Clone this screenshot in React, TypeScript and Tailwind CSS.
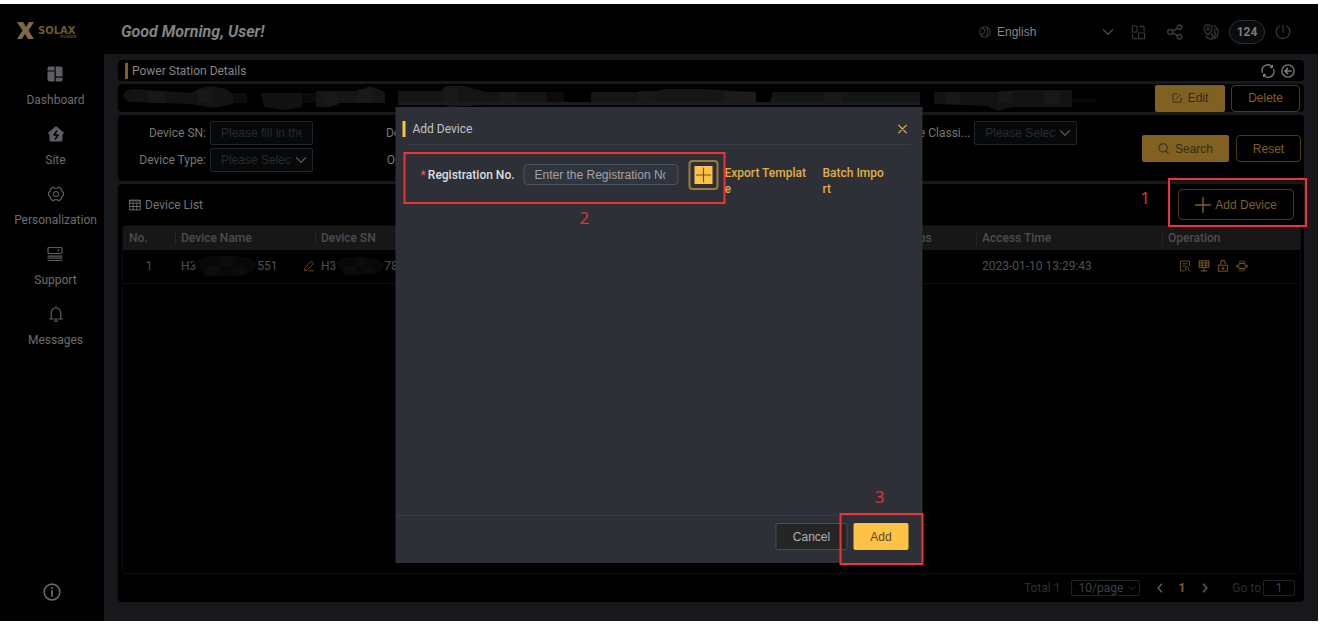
import { FC, ReactNode } from "react";

type IconProps = { className?: string; children: ReactNode; size?: string };

const Icon: FC<IconProps> = ({ className = "", children, size = "0 0 16 16" }) => (
  <svg
    viewBox={size}
    className={className}
    fill="none"
    stroke="currentColor"
    strokeWidth="1.2"
    strokeLinecap="round"
    strokeLinejoin="round"
    aria-hidden="true"
  >
    {children}
  </svg>
);

const Chevron: FC<{ className?: string }> = ({ className }) => (
  <Icon className={className}>
    <path d="M2 5l6 6 6-6" strokeWidth="1.6" />
  </Icon>
);

const Logo = () => (
  <div className="flex h-[50px] items-center pt-1 pl-[17px]">
    <svg viewBox="0 0 62 20" className="h-5 w-[62px]" aria-hidden="true">
      <path
        d="M0 1h6l3 5 3-5h5l-5.500 8.500L17 18h-6l-3-5-3 5H0l5.500-8.500z"
        fill="#7d6a45"
      />
      <text
        x="21"
        y="13"
        fontSize="10"
        fontWeight="700"
        fontFamily="DejaVu Sans, sans-serif"
        fill="#745821"
      >
        SOLAX
      </text>
      <text
        x="43"
        y="17"
        fontSize="4"
        fontWeight="700"
        fontFamily="DejaVu Sans, sans-serif"
        fill="#5a4418"
      >
        POWER
      </text>
    </svg>
  </div>
);

const menu = [
  {
    label: "Dashboard",
    icon: (
      <g fill="currentColor" stroke="none">
        <path d="M2.500 0.500H7.500V4.500H0.500V2.500a2 2 0 0 1 2-2z" />
        <path d="M0.500 5.500H7.500V15.500H2.500a2 2 0 0 1-2-2z" />
        <path d="M8.700 0.500H13.500a2 2 0 0 1 2 2V10.500H8.700z" />
        <path d="M8.700 11.700H15.500V13.500a2 2 0 0 1-2 2H8.700z" />
      </g>
    ),
  },
  {
    label: "Site",
    icon: (
      <>
        <path
          d="M8 0L16 6.800 15 8.500h-.5V14a1.500 1.500 0 0 1-1.500 1.500H3A1.500 1.500 0 0 1 1.500 14V8.500H1L0 6.800z"
          fill="currentColor"
          stroke="none"
        />
        <path d="M8.800 5L5.800 9h4.400L7.300 13" stroke="#000" strokeWidth="1.500" />
      </>
    ),
  },
  {
    label: "Personalization",
    icon: (
      <>
        <path d="M5 1.300c1 .9 1.800 1 3 1s2-.1 3-1l2.200 1.400c-.2 1.400 0 2.300 2.300 4v2.600c-2.300 1.700-2.500 2.600-2.300 4L11 14.700c-1-.9-1.800-1-3-1s-2 .1-3 1l-2.200-1.400c.2-1.400 0-2.300-2.300-4V6.700c2.300-1.700 2.500-2.600 2.300-4z" />
        <path d="M8 5.300l2.300 1.300v2.800L8 10.700 5.700 9.400V6.600z" />
      </>
    ),
  },
  {
    label: "Support",
    icon: (
      <>
        <rect x="1" y="1.500" width="14" height="6" rx="1" />
        <path d="M11.500 3.500v1.500M1 10.200h14M1 12.200h14M1 14.500h14" />
      </>
    ),
  },
  {
    label: "Messages",
    icon: (
      <path d="M8 0.500v1.500M1.500 13h13M3.300 13V7.200C3.300 4 5.300 2 8 2s4.700 2 4.700 5.200V13M6.500 15.200h3" />
    ),
  },
];

const Sidebar = () => (
  <aside className="flex w-[104px] shrink-0 flex-col bg-black">
    <Logo />
    <nav className="flex flex-col items-center gap-4 pt-3 pl-[7px]">
      {menu.map((item) => (
        <a
          key={item.label}
          href="#"
          className="flex flex-col items-center gap-2 text-xs leading-5 text-[#6c6c6c]"
        >
          <Icon className="size-4 text-[#5c5e61]">{item.icon}</Icon>
          {item.label}
        </a>
      ))}
    </nav>
    <button aria-label="About" className="mt-auto mb-5 ml-[43px] text-[#6b6762]">
      <Icon className="size-[18px]">
        <circle cx="8" cy="8" r="7" strokeWidth="1.400" />
        <path d="M8 7v4.500M8 4.300v.4" strokeWidth="1.600" />
      </Icon>
    </button>
  </aside>
);

const Header = () => (
  <header className="flex h-[50px] items-center bg-black pt-1.5 pr-[27px] pl-[17px]">
    <h1 className="text-base font-bold text-[#828282] italic">Good Morning, User!</h1>
    <div className="ml-auto flex items-center text-[#323a42]">
      <Icon className="mr-1.5 size-3">
        <circle cx="8" cy="8" r="7" strokeWidth="1.500" />
        <path
          d="M5 1.500c0 3 4 3 3 6s-5 1-4 6M11 2c-2 3 3 4 0 7-1 2-1 4 0 5"
          strokeWidth="1.500"
        />
      </Icon>
      <div className="relative w-[117px]">
        <select
          aria-label="Language"
          className="block w-full appearance-none font-['Liberation_Sans',sans-serif] text-xs text-[#858585]"
        >
          <option>English</option>
        </select>
        <Chevron className="pointer-events-none absolute top-0.5 right-0 size-3 text-[#4b4b4b]" />
      </div>
      <button aria-label="Apps" className="ml-[17px]">
        <Icon className="size-[15px]">
          <path d="M1.500 1h5v6.500h-5zM8 8.500h6.500v6H8zM1.500 10v2.500a2 2 0 0 0 2 2H6M9 1.500h3a2 2 0 0 1 2 2v3" />
        </Icon>
      </button>
      <button aria-label="Share" className="ml-[21px]">
        <Icon className="size-4">
          <circle cx="3.200" cy="8" r="2.500" strokeWidth="1.500" />
          <circle cx="12.500" cy="3.300" r="2.300" strokeWidth="1.500" />
          <circle cx="12.500" cy="12.700" r="2.300" strokeWidth="1.500" />
          <path d="M5.500 7l4.900-2.500M5.500 9l4.900 2.500" strokeWidth="1.500" />
        </Icon>
      </button>
      <button aria-label="Region" className="ml-5">
        <Icon className="size-4">
          <path d="M5 11C2.500 8.500 1 7 1 4.800a4 4 0 0 1 8 0C9 7 7.500 8.500 5 11z" />
          <circle cx="5" cy="4.800" r="1.300" />
          <path d="M10 1.500a7 7 0 0 1 1 13A7 7 0 0 1 3 12.500M14.500 5c-3 0-4 2-2.500 4s-1 2-1 5M8 9.500l2 2-1 3" />
        </Icon>
      </button>
      <button className="ml-2.5 h-6 w-9 rounded-full border border-[#2a3036] bg-[#0a0b0d] text-xs font-bold text-[#7b7b7b]">
        124
      </button>
      <button aria-label="Log out" className="ml-2.5">
        <Icon className="size-4">
          <path d="M8 1v7M4.500 2a6.800 6.800 0 1 0 7 0" />
        </Icon>
      </button>
    </div>
  </header>
);

const TitleBar = () => (
  <section className="flex h-[21px] items-center rounded bg-black pr-[9px] pl-[7px]">
    <span className="mr-1 h-4 w-[3px] bg-[#80601f]" />
    <h2 className="text-xs text-[#858585]">Power Station Details</h2>
    <div className="ml-auto flex gap-1.5 text-[#7c7c7c]">
      <button aria-label="Refresh">
        <Icon className="size-3.5">
          <path
            d="M1.500 9.500A6.500 6.500 0 0 1 13 3.800M14.500 6.500A6.500 6.500 0 0 1 3 12.300M13 1.500v2.500h-2M3 14.500V12h2"
            strokeWidth="1.500"
          />
        </Icon>
      </button>
      <button aria-label="Back">
        <Icon className="size-3.5">
          <circle cx="8" cy="8" r="7" strokeWidth="1.500" />
          <path d="M11.500 8h-7M7.500 5l-3 3 3 3" strokeWidth="1.800" />
        </Icon>
      </button>
    </div>
  </section>
);

// blurred-out station summary
const MaskedSummary = () => (
  <svg viewBox="0 0 990 28" className="h-7 w-[990px]" aria-hidden="true">
    <path d="M6 9q4-4 10-4l57 4 9-5 12-2 14 3 7 5v10l-20 4-22-4-58-2H12q-9-4-6-9z" fill="#131313" />
    <path d="M115 9h14v10h-14z" fill="#0c0c0c" />
    <path d="M143 9h41v14l-16 3-22-3z" fill="#131114" />
    <path d="M184 9h14v10h-14z" fill="#0a0a0a" />
    <path d="M198 7h42l12-5 15 6v11h-46l-8 4h-15z" fill="#161616" />
    <path d="M280 7h42l6-5h18l22 6h60v12h-44l-50 3-8-2h-46z" fill="#151514" />
    <path d="M428 8h18v12h-18z" fill="#0d0a08" />
    <path d="M473 8h60l16-3h34l55 3v13H473z" fill="#161617" />
    <path d="M606 8h32v13h-32z" fill="#1c1b1a" />
    <path d="M655 8h147v13H651z" fill="#141515" />
    <path d="M280 18h522v3H280z" fill="#1a1b20" />
    <path d="M816 8h66l16-2h56v17h-60l-14 4-10-5-54-2z" fill="#131313" />
    <path d="M954 14h24v5h-24z" fill="#080808" />
    <path
      d="M30 8h17v11H30zM80 5h14v14H80zM206 8h14v13h-14zM239 5h14v14h-14zM326 4h14v15h-14zM382 8h16v12h-16zM520 7h17v14h-17zM706 8h18v13h-18zM828 8h14v12h-14zM880 7h14v12h-14zM926 7h16v13h-16z"
      fill="#1c1c1c"
      opacity=".6"
    />
  </svg>
);

const goldFill =
  "flex items-center justify-center rounded-xs bg-[#806122] font-['Liberation_Sans',sans-serif] text-xs text-[#342c1c]";
const goldLine =
  "flex items-center justify-center rounded border border-[#4d3a15] font-['Liberation_Sans',sans-serif] text-xs text-[#80611f]";

const SummaryBar = () => (
  <section className="flex h-7 items-center rounded bg-black pr-1">
    <div className="min-w-0 flex-1 overflow-hidden">
      <MaskedSummary />
    </div>
    <button className={`${goldFill} h-[27px] w-[70px] gap-1.5`}>
      <Icon className="size-2.5">
        <path d="M9 1.500H1.500v13h13V8M6 10l8-8" strokeWidth="1.400" />
      </Icon>
      Edit
    </button>
    <button className={`${goldLine} ml-1.5 h-[27px] w-[69px]`}>Delete</button>
  </section>
);

type FieldProps = { id: string; label: string; select?: boolean; place: string };

const Field: FC<FieldProps> = ({ id, label, select, place }) => (
  <div className={`flex items-center gap-1 ${place}`}>
    <label
      htmlFor={id}
      className="w-[88px] text-right text-xs whitespace-nowrap text-[#777]"
    >
      {label}
    </label>
    <div className="relative w-[103px] font-['Liberation_Sans',sans-serif] text-xs">
      {select ? (
        <>
          <select
            id={id}
            className="block h-6 w-full appearance-none rounded-xs border border-[#1d242a] bg-[#06080a] pr-5 pl-2.5 text-[#252c32]"
          >
            <option>Please Select</option>
          </select>
          <Chevron className="pointer-events-none absolute top-1.5 right-1.5 size-3 text-[#555]" />
        </>
      ) : (
        <input
          id={id}
          placeholder="Please fill in the"
          className="block h-6 w-full rounded-xs border border-[#1d242a] bg-[#06080a] px-2.5 placeholder:text-[#252c32]"
        />
      )}
    </div>
  </div>
);

const Filters = () => (
  <section className="flex h-[66px] rounded bg-black pr-[3px]">
    <div className="grid flex-1 grid-cols-4 grid-rows-[24px_24px] gap-y-[3px] pt-1.5">
      <Field id="sn" label="Device SN:" place="col-start-1" />
      <Field id="model" label="Device Model:" place="col-start-2" />
      <Field id="class" label="Device Classi..." select place="col-start-4" />
      <Field id="type" label="Device Type:" select place="col-start-1" />
      <Field id="online" label="Online Status:" select place="col-start-2" />
    </div>
    <button className={`${goldFill} mt-5 ml-[5px] h-[27px] w-[87px] gap-1.5`}>
      <Icon className="size-[11px]">
        <circle cx="7.500" cy="7" r="6" strokeWidth="1.500" />
        <path d="M11.500 11.500l3.500 3.500" strokeWidth="1.500" />
      </Icon>
      Search
    </button>
    <button className={`${goldLine} mt-5 ml-[7px] h-[27px] w-[65px]`}>Reset</button>
  </section>
);

const Mark: FC<{ className: string }> = ({ className }) => (
  <span className={`pointer-events-none absolute z-20 border-2 border-[#ee3338] ${className}`} />
);

const MarkNumber: FC<{ className: string; children: string }> = ({ className, children }) => (
  <span
    className={`absolute z-20 font-['Noto_Sans',sans-serif] text-[17px] leading-5 text-[#dd3439] ${className}`}
  >
    {children}
  </span>
);

const Smudge: FC<{ className: string }> = ({ className }) => (
  <svg viewBox="0 0 66 22" className={className} preserveAspectRatio="none" aria-hidden="true">
    <path d="M0 7L18 1h28l14 3 6 6-4 7-12 4H14L8 14z" fill="#070808" />
    <path d="M28 2h14v9H28zM14 11h14v9H14zM42 11h12v8H42z" fill="#0b0c0c" />
  </svg>
);

const rowActions = [
  {
    name: "Details",
    icon: (
      <path d="M7 14.500H2v-13h12v6M5 5h6M5 8h3M10.500 13.500a2.200 2.200 0 1 1 2-1l2 2.500" />
    ),
  },
  {
    name: "Panels",
    icon: (
      <path d="M1.500 1h13v9h-13zM1.500 4h13M1.500 7h13M5.500 1v9M10.500 1v9M8 10v4M4.500 14.500h7" strokeWidth="1.500" />
    ),
  },
  {
    name: "Unlock",
    icon: (
      <path d="M2 7h12v8H2zM5 7V3.500a3 3 0 0 1 6 0V5M8 9.500v3M6.500 11h3" strokeWidth="1.500" />
    ),
  },
  {
    name: "Unbind",
    icon: (
      <path
        d="M4.500 4.500h7L12.500 7H15v2h-2.500l-1 2.500h-7L3.500 9H1V7h2.500zM5 1.500l.5.8M8 1v1M11 1.500l-.5.8M5 14.500l.5-.8M8 15v-1M11 14.500l-.5-.8"
        strokeWidth="1.500"
      />
    ),
  },
];

const th = "p-0 text-left font-medium";
const divider = "block border-l border-[#232325] pl-[5px] leading-[14px]";

const DeviceTable = () => (
  <div className="min-h-[348px] flex-1 overflow-hidden rounded border border-[#0d0d11]">
    <table className="w-full table-fixed border-collapse text-xs text-[#515154]">
      <colgroup>
        <col className="w-[52px]" />
        <col className="w-[140px]" />
        <col />
        <col className="w-[85px]" />
        <col className="w-[186px]" />
        <col className="w-[138px]" />
      </colgroup>
      <thead>
        <tr className="h-6 bg-[#171718] text-[#4c4d52]">
          <th className={`${th} pl-1.5`}>No.</th>
          <th className={th}>
            <span className={divider}>Device Name</span>
          </th>
          <th className={th}>
            <span className={divider}>Device SN</span>
          </th>
          <th className={th}>
            <span className={divider}>Status</span>
          </th>
          <th className={th}>
            <span className={divider}>Access Time</span>
          </th>
          <th className={th}>
            <span className={divider}>Operation</span>
          </th>
        </tr>
      </thead>
      <tbody>
        <tr className="h-[33px] border-b border-[#0e0e11]">
          <td className="p-0 text-center">1</td>
          <td className="p-0 pl-1.5">
            <div className="flex items-center">
              H3
              <Smudge className="-ml-1 h-[22px] w-[65px]" />
              551
              <button aria-label="Rename" className="ml-auto text-[#6b5019]">
                <Icon className="size-3">
                  <path d="M2 14l1-4 8-8.500 3 3L6 13zM8 14.500h6" />
                </Icon>
              </button>
            </div>
          </td>
          <td className="p-0 pl-1.5">
            <div className="flex items-center">
              H3
              <Smudge className="-ml-0.5 h-5 w-[50px]" />
              78
            </div>
          </td>
          <td className="p-0" />
          <td className="p-0 pl-1.5">2023-01-10 13:29:43</td>
          <td className="p-0 pl-[17px]">
            <div className="flex gap-[7px] text-[#6d521b]">
              {rowActions.map((action) => (
                <button key={action.name} aria-label={action.name}>
                  <Icon className="size-3">{action.icon}</Icon>
                </button>
              ))}
            </div>
          </td>
        </tr>
      </tbody>
    </table>
  </div>
);

const Pagination = () => (
  <footer className="flex h-7 items-center justify-end pr-1.5 text-xs text-[#2e2e2e]">
    <span>Total 1</span>
    <div className="relative ml-[11px] w-[69px]">
      <select
        aria-label="Page size"
        className="block h-4 w-full appearance-none rounded-xs border border-[#1d2228] pl-1.5 text-xs leading-[14px] text-[#3a4149]"
      >
        <option>10/page</option>
      </select>
      <Chevron className="pointer-events-none absolute top-1 right-1 size-2 text-[#444]" />
    </div>
    <button aria-label="Previous page" className="ml-3.5 text-[#5a5a5a]">
      <Icon className="size-3">
        <path d="M10 3L5.500 8l4.500 5" strokeWidth="2.200" />
      </Icon>
    </button>
    <button className="ml-3 font-bold text-[#80601f]">1</button>
    <button aria-label="Next page" className="ml-3.5 text-[#5a5a5a]">
      <Icon className="size-3">
        <path d="M6 3l4.500 5L6 13" strokeWidth="2.200" />
      </Icon>
    </button>
    <label htmlFor="goto" className="ml-[21px]">
      Go to
    </label>
    <input
      id="goto"
      defaultValue="1"
      className="ml-0.5 h-4 w-8 rounded-xs border border-[#1d2228] text-center text-xs text-[#3a4149]"
    />
  </footer>
);

const DeviceList = () => (
  <section className="relative flex flex-1 flex-col rounded bg-black pr-[3px] pl-1">
    <div className="flex h-[41px] items-center pr-[7px] pl-[7px] text-xs text-[#757575]">
      <Icon className="mr-1 size-3">
        <path d="M1 1.500h14v13H1zM1 5.500h14M1 10h14M5.500 5.500v9M10.500 5.500v9M1 2.500h14" />
      </Icon>
      <h3>Device List</h3>
      <button className={`${goldLine} ml-auto h-[31px] w-[116px] gap-1`}>
        <Icon className="size-4">
          <path d="M8 0.500v15M0.500 8h15" strokeWidth="1.400" />
        </Icon>
        Add Device
      </button>
    </div>
    <DeviceTable />
    <Pagination />
    <MarkNumber className="top-1 right-[154px]">1</MarkNumber>
    <Mark className="-top-1.5 -right-[3px] h-[49px] w-[139px]" />
  </section>
);

const AddDeviceDialog = () => (
  <div
    role="dialog"
    aria-labelledby="dialog-title"
    className="absolute top-[103px] left-1/2 z-10 flex w-[527px] -translate-x-1/2 flex-col bg-[#2d3037] text-xs"
  >
    <div className="mr-3 ml-[7px] flex h-[37px] items-center pt-1.5">
      <span className="mr-[7px] h-4 w-[3px] bg-[#ffc244]" />
      <h2 id="dialog-title" className="text-[#c4c4c6]">
        Add Device
      </h2>
      <button aria-label="Close" className="ml-auto pr-[3px] text-[#d3a33f]">
        <Icon className="size-2.5">
          <path d="M2 2l12 12M14 2L2 14" strokeWidth="2" />
        </Icon>
      </button>
    </div>
    <div className="mr-3 ml-3 border-t border-[#3a3e47]" />
    <form className="relative flex min-h-[370px] items-start pt-[15px] pl-[25px]">
      <label
        htmlFor="reg"
        className="mt-[5px] w-[95px] shrink-0 leading-5 font-medium text-[#dedee0]"
      >
        <span className="mr-0.5 text-[#d6595b]">*</span>
        Registration No.
      </label>
      <input
        id="reg"
        placeholder="Enter the Registration No."
        className="mt-1 ml-2 h-[21px] w-[155px] shrink-0 rounded border border-[#4a5562] bg-[#30343c] pr-3 pl-2.5 font-['Liberation_Sans',sans-serif] placeholder:text-[#a2a4a9]"
      />
      <button
        type="button"
        aria-label="Add registration number"
        className="ml-2.5 flex size-[30px] shrink-0 items-center justify-center rounded border-2 border-[#9b7b36]"
      >
        <span className="flex size-[18px] items-center justify-center bg-[#ffc244] text-[#64502a]">
          <Icon className="size-4">
            <path d="M8 1v14M1 8h14" />
          </Icon>
        </span>
      </button>
      <a
        href="#"
        className="mt-[5px] ml-1.5 w-[86px] shrink-0 leading-4 font-medium break-all text-[#e4ae42]"
      >
        Export Template
      </a>
      <a
        href="#"
        className="mt-[5px] ml-3 w-[64px] shrink-0 leading-4 font-medium break-all text-[#e4ae42]"
      >
        Batch Import
      </a>
      <Mark className="top-[7px] left-2 h-[52px] w-[322px]" />
      <MarkNumber className="top-[63px] left-[184px]">2</MarkNumber>
      <MarkNumber className="right-[38px] bottom-2">3</MarkNumber>
    </form>
    <div className="relative flex h-12 justify-end gap-1.5 border-t border-[#363b44] pt-[7px] pr-3.5 font-['Liberation_Sans',sans-serif]">
      <button className="h-[27px] w-[72px] rounded-xs border border-[#494c55] bg-[#252526] text-[#b0b0b1]">
        Cancel
      </button>
      <button className="h-[27px] w-[55px] rounded-xs bg-[#ffc244] text-[#5b4a2c]">Add</button>
      <Mark className="-top-[3px] -right-px h-[52px] w-[84px]" />
    </div>
  </div>
);

const App = () => {
  return (
    <div className="flex min-h-screen flex-col bg-white pt-1 pr-[5px] pb-1.5 font-[Roboto,sans-serif]">
      <div className="relative flex flex-1 bg-[#17181c]">
        <Sidebar />
        <div className="flex min-w-0 flex-1 flex-col">
          <Header />
          <main className="flex flex-1 flex-col gap-[3px] pt-1.5 pr-3.5 pb-[19px] pl-3.5">
            <TitleBar />
            <SummaryBar />
            <Filters />
            <DeviceList />
          </main>
        </div>
        <AddDeviceDialog />
      </div>
    </div>
  );
};

export default App;
